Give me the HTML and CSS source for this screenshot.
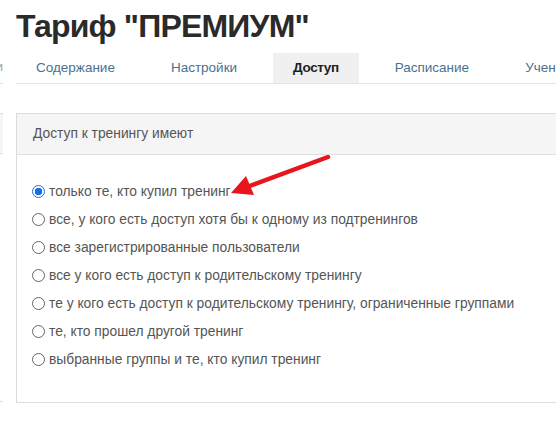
FILE: index.html
```html
<!DOCTYPE html>
<html lang="ru">
<head>
<meta charset="utf-8">
<title>Тариф "ПРЕМИУМ"</title>
<link rel="stylesheet" href="styles.css">
</head>
<body>
<div class="page">
  <h1 class="title">Тариф "ПРЕМИУМ"</h1>
  <div class="tabs-row">
    <div class="stub stub-tab"><span>ни</span></div>
    <nav class="tabs">
      <a class="tab">Содержание</a>
      <a class="tab">Настройки</a>
      <a class="tab active">Доступ</a>
      <a class="tab">Расписание</a>
      <a class="tab">Ученики</a>
    </nav>
  </div>
  <div class="panel-row">
    <div class="stub stub-panel">
      <div class="stub-head"></div>
      <div class="stub-body"></div>
    </div>
    <section class="panel">
      <div class="panel-head">Доступ к тренингу имеют</div>
      <div class="panel-body">
        <label class="opt"><input type="radio" name="acc" checked><span>только те, кто купил тренинг</span></label>
        <label class="opt"><input type="radio" name="acc"><span>все, у кого есть доступ хотя бы к одному из подтренингов</span></label>
        <label class="opt"><input type="radio" name="acc"><span>все зарегистрированные пользователи</span></label>
        <label class="opt"><input type="radio" name="acc"><span>все у кого есть доступ к родительскому тренингу</span></label>
        <label class="opt"><input type="radio" name="acc"><span>те у кого есть доступ к родительскому тренингу, ограниченные группами</span></label>
        <label class="opt"><input type="radio" name="acc"><span>те, кто прошел другой тренинг</span></label>
        <label class="opt"><input type="radio" name="acc"><span>выбранные группы и те, кто купил тренинг</span></label>
      </div>
    </section>
  </div>
</div>
<svg class="arrow" width="556" height="436" viewBox="0 0 556 436">
  <line x1="328" y1="157" x2="247" y2="187" stroke="#e8161c" stroke-width="4.5" stroke-linecap="round"/>
  <polygon points="231,193 254,195 246,176" fill="#e8161c"/>
</svg>
</body>
</html>
```

FILE: styles.css
```css
html, body {
  margin: 0;
  padding: 0;
  background: #fff;
  overflow: hidden;
}
body {
  width: 556px;
  height: 436px;
  position: relative;
  font-family: "Liberation Sans", Arial, sans-serif;
  color: #555;
}
.page {
  padding-top: 7px;
}
.title {
  margin: 0 0 8px 16px;
  font-size: 32px;
  line-height: 38px;
  font-weight: bold;
  color: #2a2a2a;
  letter-spacing: -0.8px;
}
.tabs-row {
  display: flex;
  gap: 13px;
  white-space: nowrap;
}
.stub {
  width: 3px;
  flex: none;
  overflow: hidden;
}
.stub-tab {
  display: flex;
  justify-content: flex-end;
  height: 30px;
  line-height: 28px;
  font-size: 13.5px;
  color: #9aa;
  border-bottom: 1px solid #e6e6e6;
  margin-bottom: -2px;
}
.tabs {
  flex: 1;
  display: flex;
  gap: 16px;
  border-bottom: 1px solid #e6e6e6;
  height: 30px;
  overflow: hidden;
}
.tab {
  display: block;
  padding: 0 20px;
  line-height: 30px;
  font-size: 13.5px;
  color: #4a7092;
}
.tab.active {
  background: #f0f0f0;
  color: #1e1e1e;
  font-weight: bold;
  letter-spacing: -0.4px;
}
.panel-row {
  display: flex;
  gap: 13px;
  margin-top: 29px;
}
.stub-panel {
  display: flex;
  flex-direction: column;
}
.stub-head {
  height: 39px;
  background: #f5f5f5;
  border-top: 1px solid #e0e0e0;
  border-bottom: 1px solid #e0e0e0;
}
.stub-body {
  height: 247px;
  border-bottom: 1px solid #e0e0e0;
}
.panel {
  flex: 1;
  border: 1px solid #dcdcdc;
  border-right: none;
}
.panel-head {
  height: 40px;
  line-height: 40px;
  padding-left: 16px;
  background: #f5f5f5;
  border-bottom: 1px solid #e0e0e0;
  font-size: 13.8px;
  color: #555;
}
.panel-body {
  padding: 22px 0 29px 15px;
  display: flex;
  flex-direction: column;
}
.opt {
  display: flex;
  align-items: center;
  height: 28px;
  font-size: 13.8px;
  color: #555;
  white-space: nowrap;
}
.opt input {
  appearance: none;
  -webkit-appearance: none;
  width: 13px;
  height: 13px;
  margin: 0 4px 0 0;
  border: 1px solid #666;
  border-radius: 50%;
  box-sizing: border-box;
  background: #fff;
  flex: none;
}
.opt input:checked {
  border-color: #1a6fe0;
  background: radial-gradient(circle, #1a6fe0 0 3.5px, #fff 4px);
}
.arrow {
  position: absolute;
  left: 0;
  top: 0;
  pointer-events: none;
}
```
